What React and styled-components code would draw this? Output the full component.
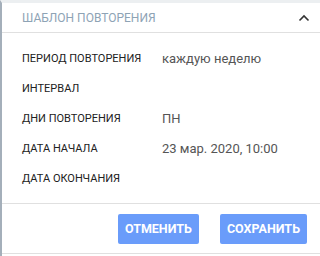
import React from "react";
import styled, { createGlobalStyle } from "styled-components";

const Global = createGlobalStyle`
  html, body { margin: 0; padding: 0; background: #fff; }
  body { font-family: Roboto, "Liberation Sans", Arial, sans-serif; }
`;

const Page = styled.div`
  width: 320px;
  height: 256px;
  box-sizing: border-box;
  border-left: 2px solid #a4afba;
  border-top: 3px solid #eceff1;
  display: flex;
  flex-direction: column;
  background: #fff;
`;

const Header = styled.div`
  height: 30px;
  box-sizing: border-box;
  border-bottom: 1px solid #e0e0e0;
  display: flex;
  align-items: center;
  justify-content: space-between;
  padding: 0 10px 0 20px;
`;

const Title = styled.span`
  font-size: 12px;
  color: #8ea3b5;
  text-transform: uppercase;
  padding-top: 1px;
`;

const Body = styled.div`
  padding: 10px 0 10px 20px;
  border-bottom: 1px solid #e0e0e0;
  display: flex;
  flex-direction: column;
`;

const Row = styled.div`
  height: 30px;
  display: flex;
  align-items: center;
`;

const Label = styled.span`
  width: 140px;
  font-size: 11px;
  color: #212121;
  text-transform: uppercase;
`;

const Value = styled.span`
  font-size: 13px;
  color: #555;
`;

const Footer = styled.div`
  height: 50px;
  box-sizing: border-box;
  border-bottom: 1px solid #e0e0e0;
  display: flex;
  align-items: center;
  justify-content: flex-end;
  gap: 21px;
  padding-right: 13px;
`;

const Button = styled.button`
  height: 30px;
  padding: 0 7px;
  border: none;
  border-radius: 2px;
  background: #6a9cfa;
  color: #fff;
  font-family: Roboto, "Liberation Sans", Arial, sans-serif;
  font-weight: 700;
  font-size: 12.5px;
  text-transform: uppercase;
`;

const rows = [
  ["Период повторения", "каждую неделю"],
  ["Интервал", ""],
  ["Дни повторения", "ПН"],
  ["Дата начала", "23 мар. 2020, 10:00"],
  ["Дата окончания", ""],
];

export default function App() {
  return (
    <>
      <Global />
      <Page>
        <Header>
          <Title>Шаблон повторения</Title>
          <svg width="12" height="8" viewBox="0 0 12 8">
            <path d="M1.5 6.5 L6 2 L10.5 6.5" fill="none" stroke="#333" strokeWidth="1.6" />
          </svg>
        </Header>
        <Body>
          {rows.map(([l, v]) => (
            <Row key={l}>
              <Label>{l}</Label>
              <Value>{v}</Value>
            </Row>
          ))}
        </Body>
        <Footer>
          <Button>Отменить</Button>
          <Button>Сохранить</Button>
        </Footer>
      </Page>
    </>
  );
}
